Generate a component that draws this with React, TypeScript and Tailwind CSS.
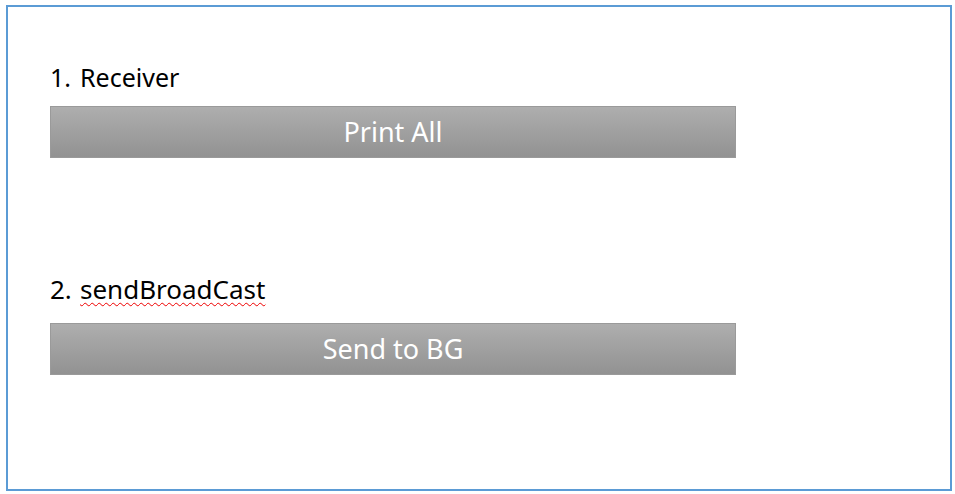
export default function App() {
  return (
    <div className="h-[494px] w-[955px] bg-white pl-[6px] pt-[5px]" style={{ fontFamily: '"Noto Sans", "Open Sans", sans-serif' }}>
      <div className="flex h-[486px] w-[946px] flex-col border-2 border-[#5b9bd5] pl-[42px] pt-[50px]">
        <div className="text-[25px] leading-[40px] text-black">
          <span className="inline-block w-[30px]">1.</span>Receiver
        </div>
        <button className="mt-[9px] h-[52px] w-[686px] border border-[#9a9a9a] bg-gradient-to-b from-[#aeaeae] to-[#929292] text-[27px] text-white">
          Print All
        </button>
        <div className="mt-[111px] text-[26px] leading-[40px] text-black">
          <span className="inline-block w-[30px]">2.</span>
          <span className="underline decoration-wavy decoration-[#e00] decoration-1 underline-offset-[3px]">sendBroadCast</span>
        </div>
        <button className="mt-[14px] h-[52px] w-[686px] border border-[#9a9a9a] bg-gradient-to-b from-[#aeaeae] to-[#929292] text-[27px] text-white">
          Send to BG
        </button>
      </div>
    </div>
  );
}
